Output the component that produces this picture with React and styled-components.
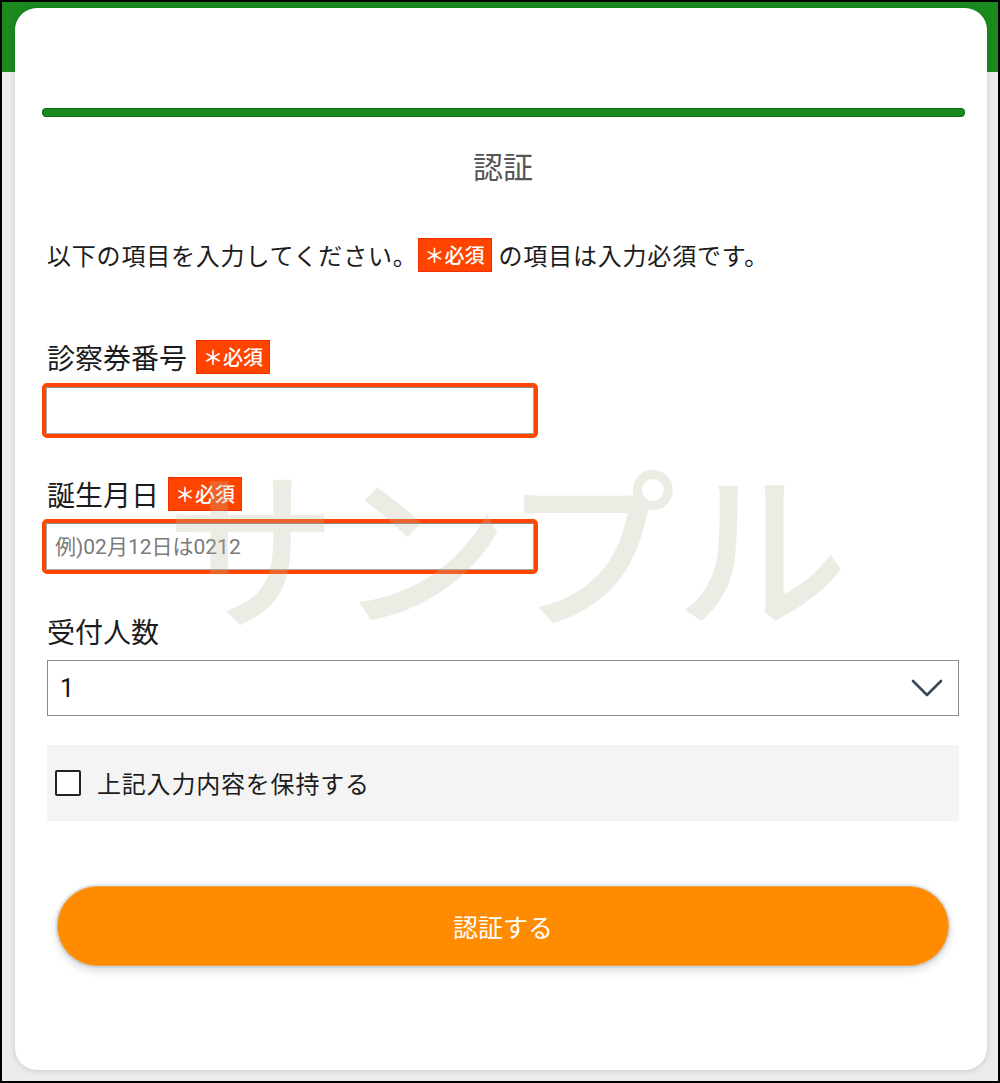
import styled, { createGlobalStyle } from 'styled-components';

const GlobalStyle = createGlobalStyle`
  * { box-sizing: border-box; }
  body {
    margin: 0;
    font-family: "Noto Sans CJK JP", "Noto Sans", sans-serif;
    color: #1c1c1c;
  }
`;

export default function App() {
  return (
    <>
      <GlobalStyle />
      <Page>
        <Card>
          <Progress />
          <Title>認証</Title>

          <Intro>
            以下の項目を入力してください。<Badge $inline>＊必須</Badge>の項目は入力必須です。
          </Intro>

          <Field $top={64}>
            <Label>
              診察券番号<Badge>＊必須</Badge>
            </Label>
            <ErrorFrame $top={6}>
              <TextInput type="text" />
            </ErrorFrame>
          </Field>

          <Field $top={36}>
            <Label>
              誕生月日<Badge>＊必須</Badge>
            </Label>
            <ErrorFrame $top={5}>
              <TextInput type="text" placeholder="例)02月12日は0212" />
            </ErrorFrame>
          </Field>

          <Field $top={37}>
            <Label>受付人数</Label>
            <Select>
              <span>1</span>
              <svg width="32" height="20" viewBox="0 0 32 20" fill="none">
                <polyline
                  points="2,3 16,17 30,3"
                  stroke="#3b4656"
                  strokeWidth="2.6"
                  strokeLinecap="round"
                  strokeLinejoin="round"
                />
              </svg>
            </Select>
          </Field>

          <KeepRow>
            <CheckBox />
            <KeepLabel>上記入力内容を保持する</KeepLabel>
          </KeepRow>

          <SubmitButton type="button">認証する</SubmitButton>

          <Watermark>サンプル</Watermark>
        </Card>
      </Page>
    </>
  );
}

const Page = styled.div`
  width: 1000px;
  height: 1083px;
  border: 2px solid #000;
  padding: 6px 11px 0 13px;
  background: linear-gradient(#1b8a1e 0, #1b8a1e 70px, #ececec 70px);
  overflow: hidden;
`;

const Card = styled.main`
  position: relative;
  height: 1062px;
  background: #fff;
  border-radius: 22px;
  box-shadow: 0 1px 6px rgba(0, 0, 0, 0.14);
  padding: 100px 28px 0 32px;
  display: flex;
  flex-direction: column;
`;

const Progress = styled.div`
  height: 9px;
  margin: 0 -6px 0 -5px;
  border-radius: 5px;
  background: #1b8a1e;
  box-shadow: inset 0 0 0 1px #0f6f12;
`;

const Title = styled.h1`
  margin: 28px 0 0;
  font-size: 30px;
  line-height: 40px;
  font-weight: 400;
  color: #555;
  text-align: center;
`;

const Intro = styled.p`
  margin: 52px 0 0;
  font-size: 24px;
  line-height: 36px;
  letter-spacing: 0.8px;
  display: flex;
  align-items: center;
`;

const Badge = styled.span`
  display: inline-block;
  margin: ${p => (p.$inline ? '0 7px 0 0' : '0 0 0 9px')};
  padding: 2px 6px;
  font-size: 20px;
  line-height: 28px;
  font-weight: 500;
  color: #fff;
  background: #ff4400;
  border: 1px solid #f03000;
  letter-spacing: 0;
`;

const Field = styled.section`
  margin-top: ${p => p.$top}px;
  display: flex;
  flex-direction: column;
`;

const Label = styled.label`
  display: flex;
  align-items: center;
  font-size: 28px;
  line-height: 40px;
  color: #1c1c1c;
`;

const ErrorFrame = styled.div`
  margin: ${p => p.$top}px 0 0 -5px;
  width: 496px;
  height: 55px;
  border: 4px solid #ff4500;
  border-radius: 5px;
`;

const TextInput = styled.input`
  display: block;
  width: 100%;
  height: 100%;
  margin: 0;
  border: 1px solid #a8a8a8;
  border-top-color: #8a8a8a;
  padding: 0 8px;
  font-family: "Roboto", "Noto Sans CJK JP", sans-serif;
  font-size: 21px;
  color: #333;
  background: #fff;
  outline: none;

  &::placeholder {
    color: #7a7a7a;
  }
`;

const Select = styled.div`
  margin-top: 9px;
  height: 56px;
  border: 1px solid #8c8c8c;
  display: flex;
  align-items: center;
  justify-content: space-between;
  padding: 0 15px 0 12px;
  font-family: "Roboto", "Noto Sans CJK JP", sans-serif;
  font-size: 25px;
  color: #111;
  background: #fff;
`;

const KeepRow = styled.div`
  margin-top: 29px;
  height: 76px;
  background: #f4f4f4;
  display: flex;
  align-items: center;
  padding-left: 8px;
  gap: 16px;
`;

const CheckBox = styled.span`
  width: 26px;
  height: 26px;
  border: 2px solid #222;
  border-radius: 2px;
  background: #fff;
`;

const KeepLabel = styled.span`
  font-size: 24px;
  line-height: 34px;
  letter-spacing: 0.8px;
  color: #1c1c1c;
`;

const SubmitButton = styled.button`
  margin: 65px 10px 0;
  height: 80px;
  border: 1px solid #f4a040;
  border-radius: 40px;
  background: #ff8c00;
  color: #fff;
  font-family: "Noto Sans CJK JP", sans-serif;
  font-size: 25px;
  box-shadow: 0 4px 10px rgba(0, 0, 0, 0.16), 0 0 0 2px rgba(220, 235, 245, 0.7);
  cursor: pointer;
`;

const Watermark = styled.div`
  position: absolute;
  left: 150px;
  top: 446px;
  font-size: 172px;
  line-height: 1;
  font-weight: 500;
  color: rgba(185, 185, 160, 0.27);
  pointer-events: none;
  white-space: nowrap;
`;
